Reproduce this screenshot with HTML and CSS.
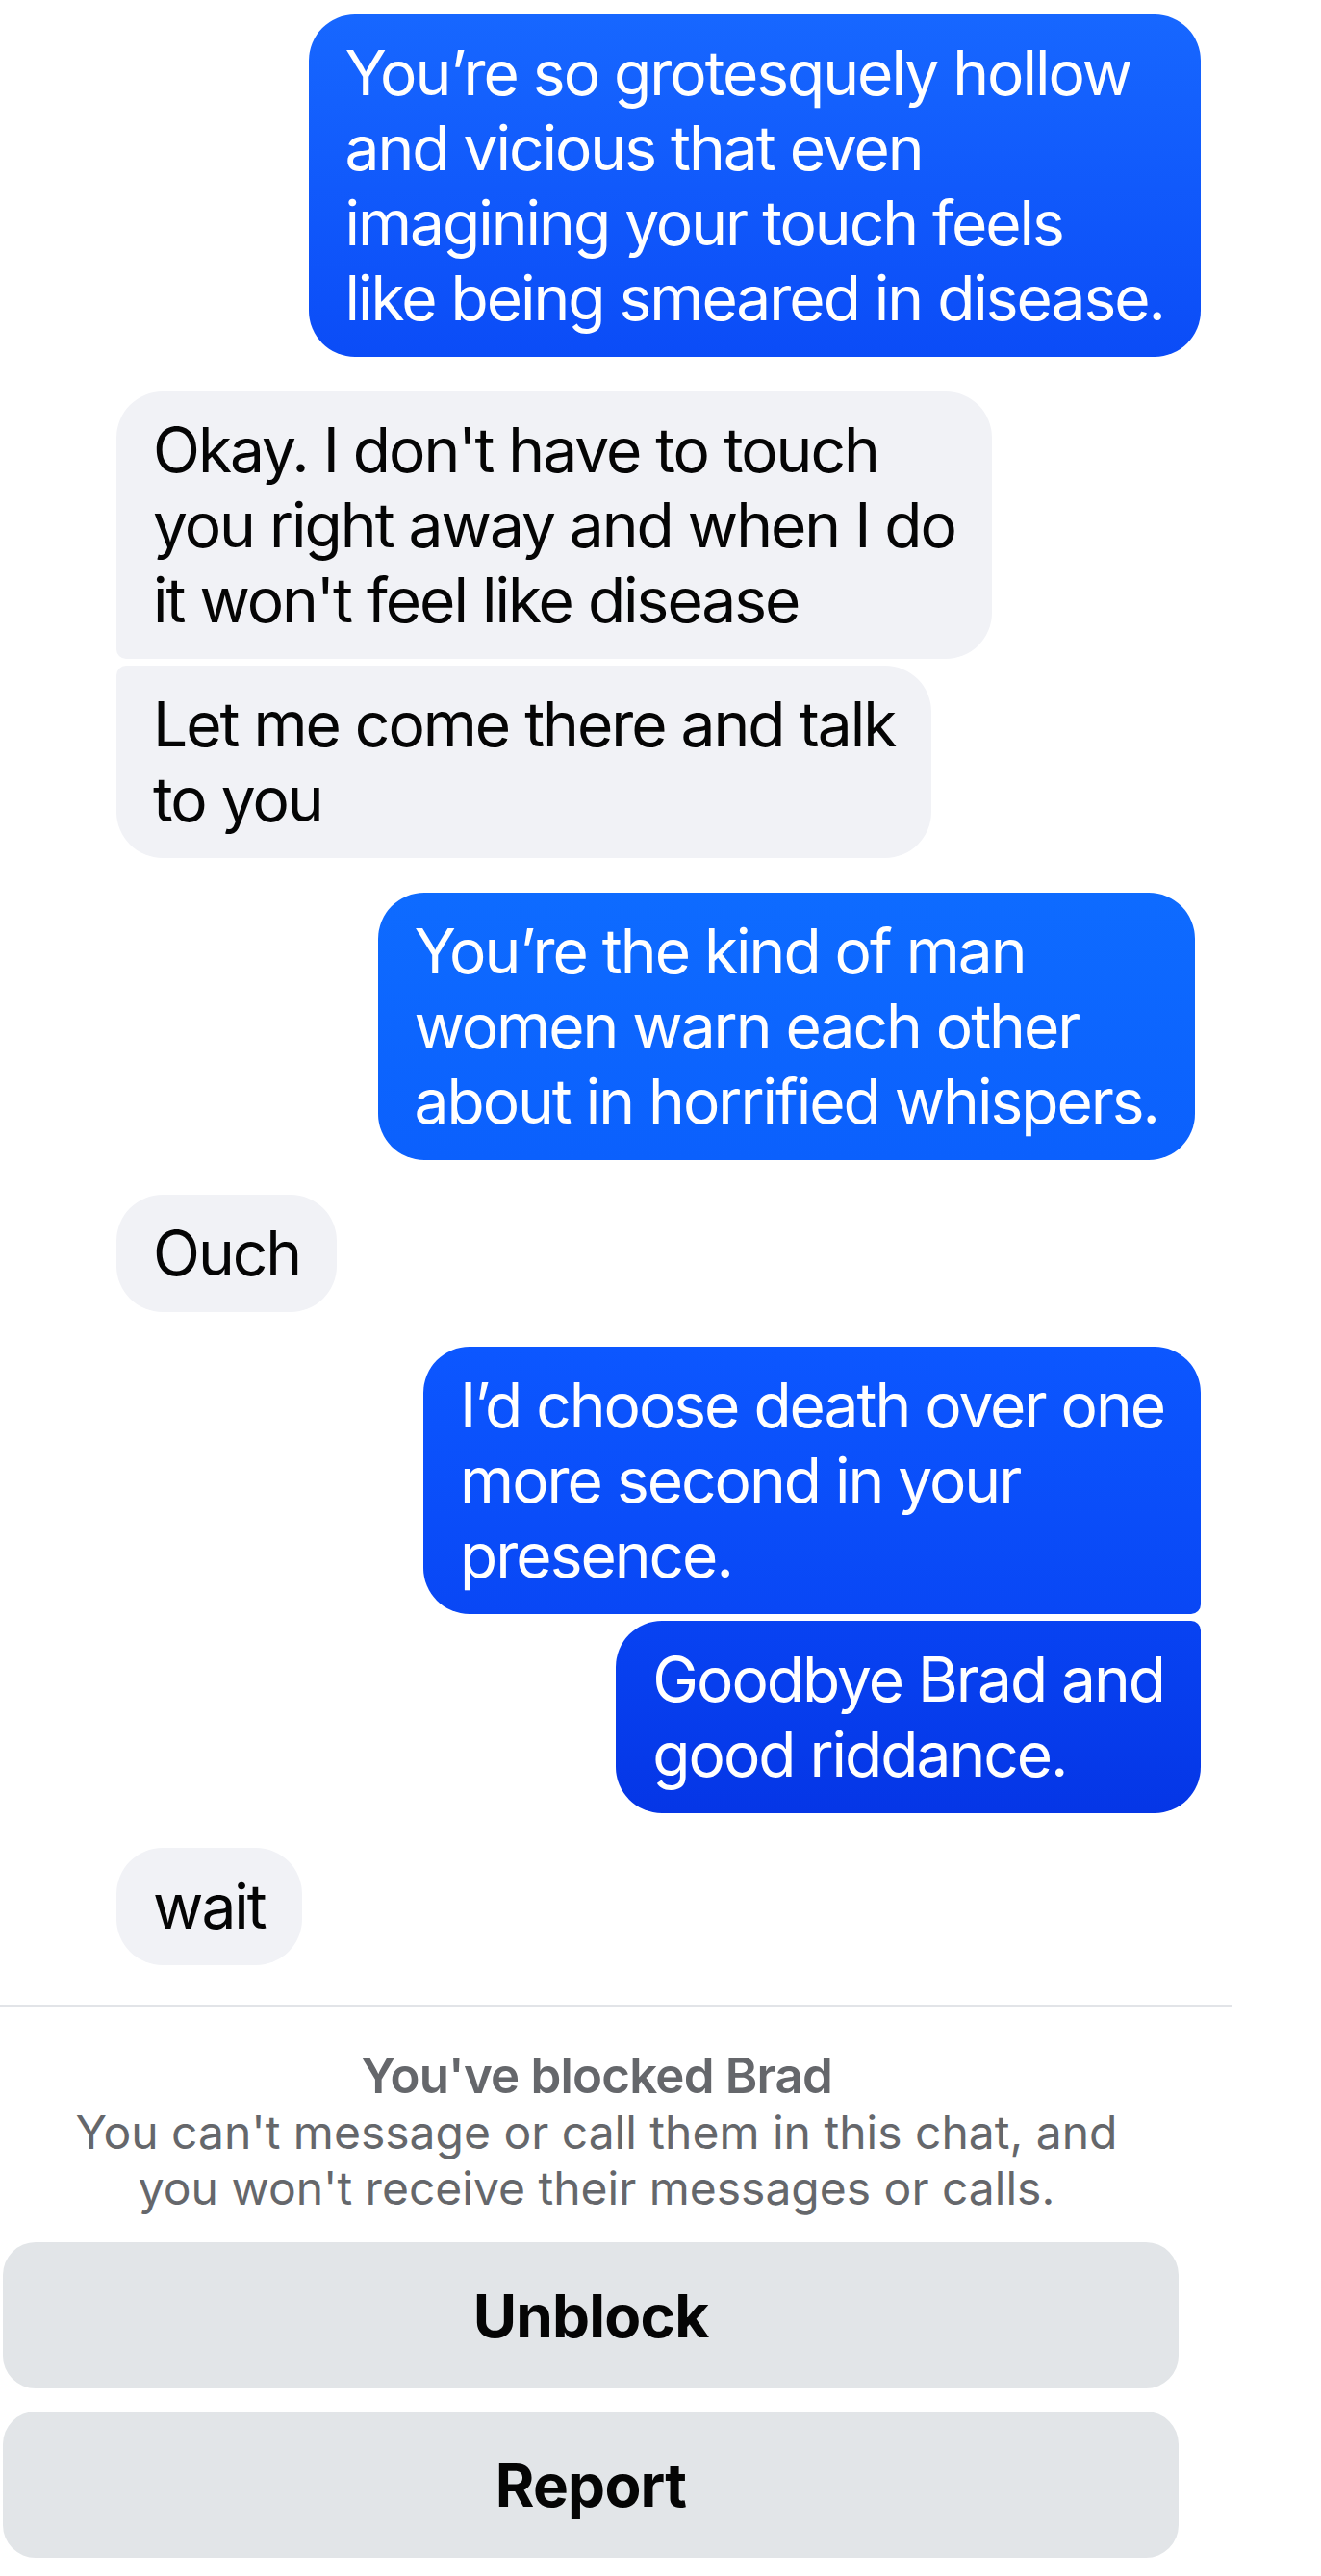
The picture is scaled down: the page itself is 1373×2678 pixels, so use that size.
FILE: index.html
```html
<!DOCTYPE html>
<html lang="en">
<head>
  <meta charset="UTF-8">
  <title>Brad</title>
  <link rel="stylesheet" href="styles.css">
</head>
<body>
  <div class="chat">
    <div class="thread">
      <div class="row out">
        <div class="bubble sent tone-1">You’re so grotesquely hollow<br>and vicious that even<br>imagining your touch feels<br>like being smeared in disease.</div>
      </div>

      <div class="row in">
        <div class="bubble received first">Okay. I don't have to touch<br>you right away and when I do<br>it won't feel like disease</div>
        <div class="bubble received last">Let me come there and talk<br>to you</div>
      </div>

      <div class="row out">
        <div class="bubble sent tone-2 nudge">You’re the kind of man<br>women warn each other<br>about in horrified whispers.</div>
      </div>

      <div class="row in">
        <div class="bubble received">Ouch</div>
      </div>

      <div class="row out">
        <div class="bubble sent tone-3 first">I’d choose death over one<br>more second in your<br>presence.</div>
        <div class="bubble sent tone-4 last">Goodbye Brad and<br>good riddance.</div>
      </div>

      <div class="row in">
        <div class="bubble received">wait</div>
      </div>
    </div>

    <div class="divider"></div>

    <div class="blocked">
      <h3>You've blocked Brad</h3>
      <p>You can't message or call them in this chat, and<br>you won't receive their messages or calls.</p>
      <div class="actions">
        <button>Unblock</button>
        <button>Report</button>
      </div>
    </div>
  </div>
</body>
</html>
```

FILE: styles.css
```css
* {
  box-sizing: border-box;
}

body {
  margin: 0;
  background: #fff;
  font-family: Inter, "Noto Sans", sans-serif;
  color: #050505;
}

.thread {
  display: flex;
  flex-direction: column;
  gap: 36px;
  padding: 15px 125px 41px 121px;
}

.row {
  display: flex;
  flex-direction: column;
  gap: 7px;
}

.row.in {
  align-items: flex-start;
}

.row.out {
  align-items: flex-end;
}

.bubble {
  font-size: 64px;
  line-height: 78px;
  letter-spacing: -2px;
  padding: 22px 38px;
  border-radius: 48px;
}

.received {
  background: #f1f2f6;
  color: #050505;
}

.sent {
  color: #fff;
}

.nudge {
  margin-right: 6px;
}

.received.first {
  border-bottom-left-radius: 10px;
}

.received.last {
  border-top-left-radius: 10px;
}

.sent.first {
  border-bottom-right-radius: 10px;
}

.sent.last {
  border-top-right-radius: 10px;
}

.tone-1 {
  background: linear-gradient(#1767ff, #0b4cf7);
}

.tone-2 {
  background: linear-gradient(#0e6bff, #0b60fd);
}

.tone-3 {
  background: linear-gradient(#0c57ff, #0947f5);
}

.tone-4 {
  background: linear-gradient(#0843f2, #0536e6);
}

.divider {
  width: 1280px;
  border-top: 2px solid #e2e4e8;
}

.blocked {
  width: 1240px;
  text-align: center;
  padding-top: 42px;
  color: #65676b;
}

.blocked h3 {
  margin: 0;
  font-size: 51px;
  line-height: 60px;
  font-weight: 600;
  letter-spacing: -0.8px;
}

.blocked p {
  margin: 0;
  font-size: 48px;
  line-height: 58px;
  letter-spacing: 0;
}

.actions {
  display: flex;
  flex-direction: column;
  gap: 24px;
  margin-top: 27px;
  padding-left: 3px;
}

.actions button {
  width: 1222px;
  height: 152px;
  border: none;
  border-radius: 34px;
  background: #e2e5e8;
  font-family: Inter, "Noto Sans", sans-serif;
  font-size: 62px;
  font-weight: 700;
  letter-spacing: -0.8px;
  color: #050505;
}
```
